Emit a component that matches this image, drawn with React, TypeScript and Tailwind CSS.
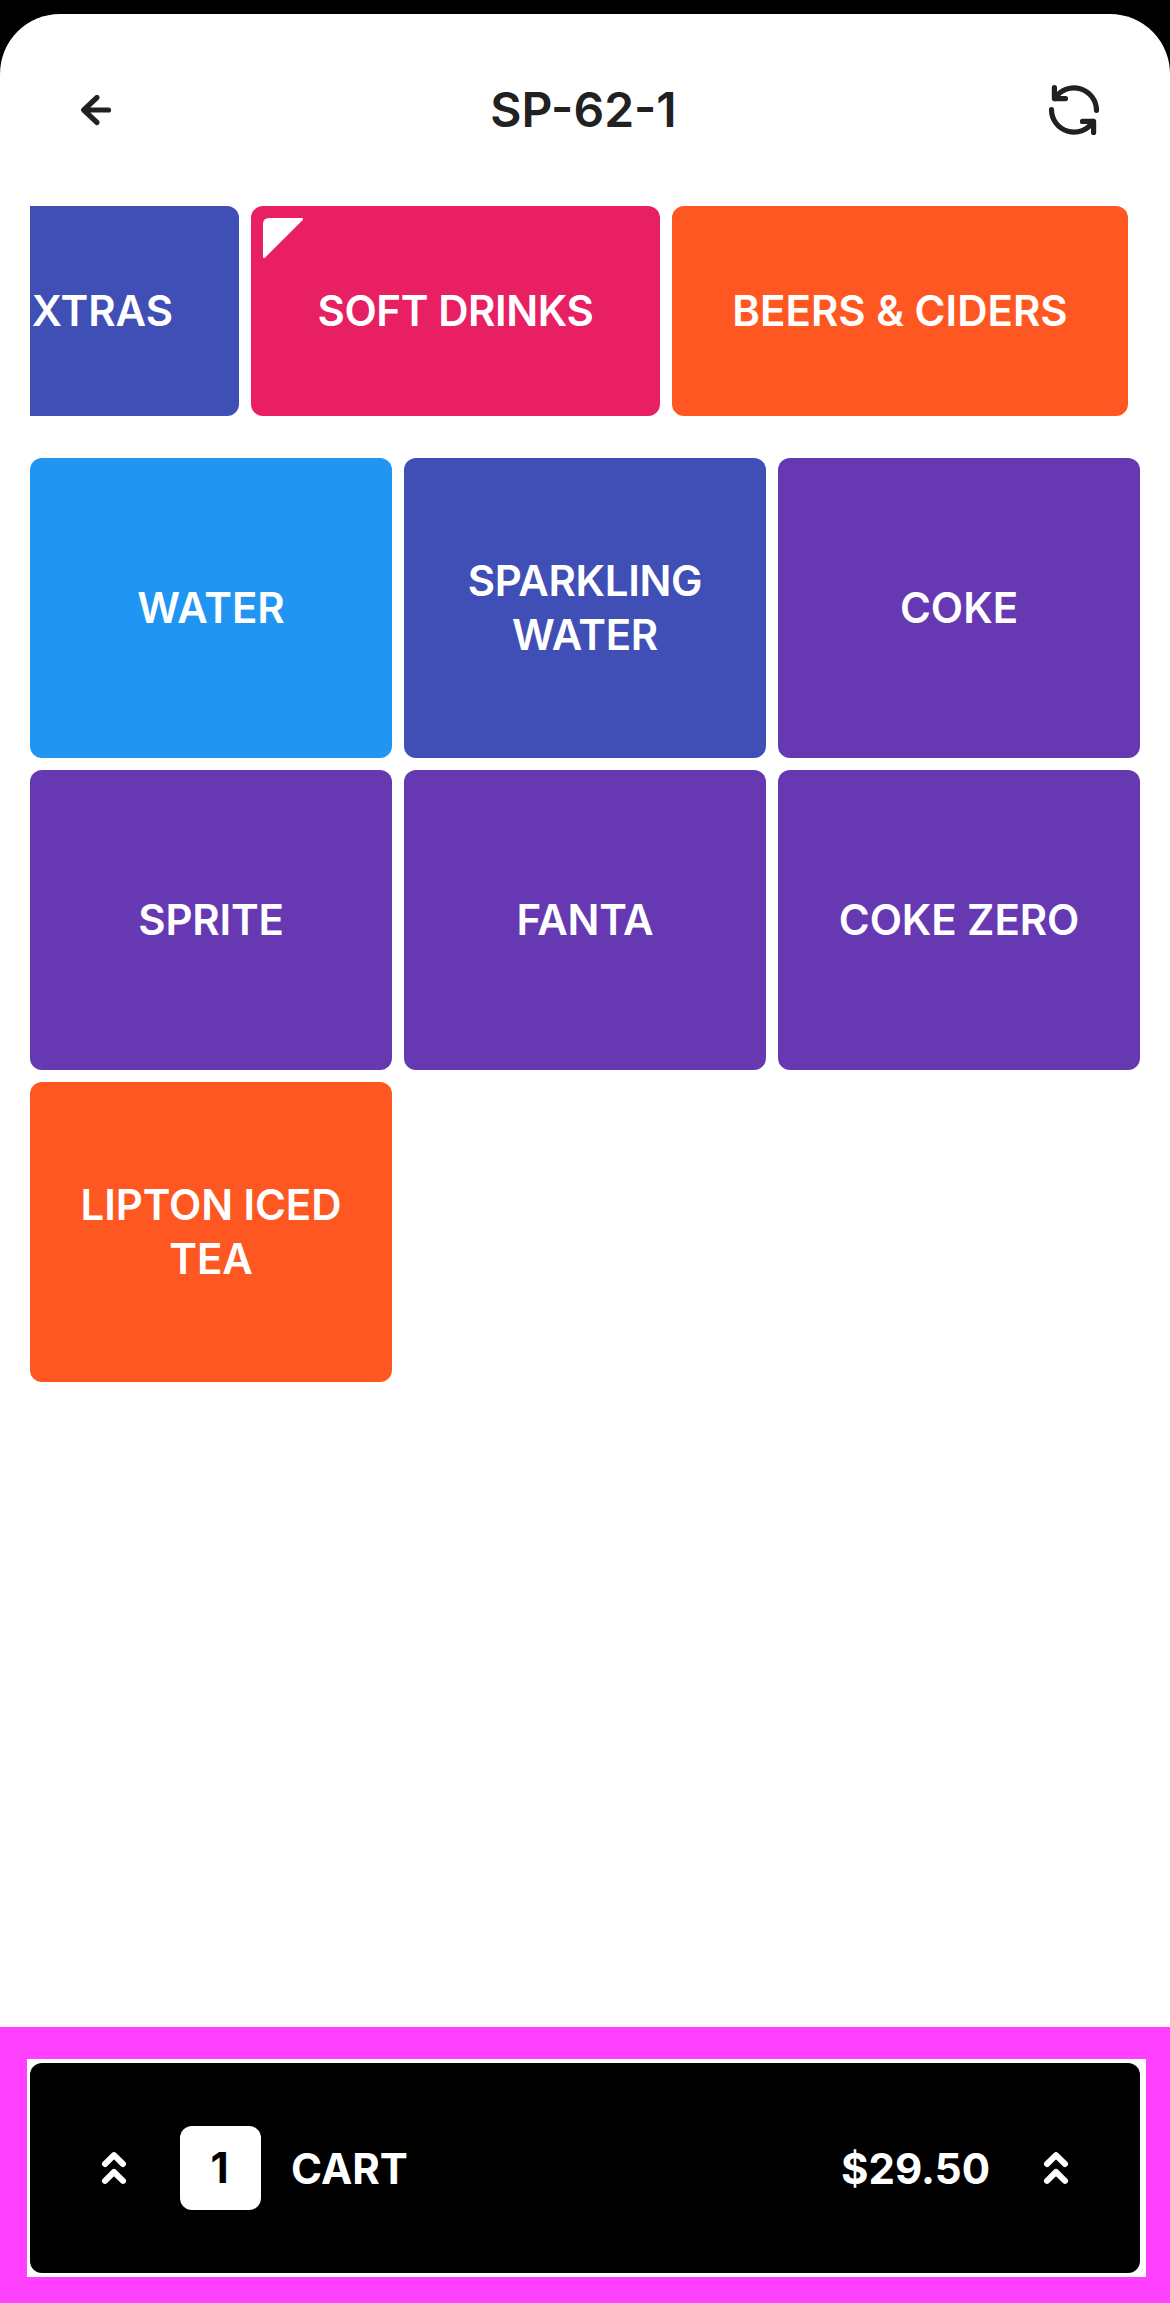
import clsx from "clsx"

type Category = {
  label: string
  className: string
  selected?: boolean
}

type Product = {
  label: string
  className: string
}

const categories: Category[] = [
  {
    label: "XTRAS",
    className: "w-[209px] justify-end rounded-r-xl bg-[#404fb5] pr-[66px]",
  },
  {
    label: "SOFT DRINKS",
    className:
      "w-[409px] justify-center rounded-xl bg-[#e81f62] tracking-[-0.4px]",
    selected: true,
  },
  {
    label: "BEERS & CIDERS",
    className: "w-[456px] justify-center rounded-xl bg-[#ff5722]",
  },
]

const products: Product[] = [
  { label: "WATER", className: "bg-[#2096f2]" },
  { label: "SPARKLING WATER", className: "bg-[#404fb5] tracking-[-0.3px]" },
  { label: "COKE", className: "bg-[#6639b3]" },
  { label: "SPRITE", className: "bg-[#6639b3] tracking-[-0.2px]" },
  { label: "FANTA", className: "bg-[#6639b3] tracking-[-0.2px]" },
  { label: "COKE ZERO", className: "bg-[#6639b3] tracking-[-0.1px]" },
  { label: "LIPTON ICED TEA", className: "bg-[#ff5722] tracking-[-0.1px]" },
]

const BackIcon = () => (
  <svg
    className="size-[60px]"
    viewBox="0 0 60 60"
    fill="none"
    stroke="currentColor"
    strokeWidth="5.2"
    strokeLinecap="round"
    strokeLinejoin="round"
  >
    <path d="M42.5 30H18M31 17.5L17.7 30L31 42.5" />
  </svg>
)

const RefreshIcon = () => (
  <svg
    className="size-[60px]"
    viewBox="0 0 60 60"
    fill="none"
    stroke="currentColor"
    strokeWidth="5.2"
    strokeLinecap="round"
    strokeLinejoin="round"
  >
    <path d="M52.5 30.3A22.5 22.5 0 0 0 10.8 18.6" />
    <path d="M10.4 7.5V18.6H21.5" />
    <path d="M7.5 29.7A22.5 22.5 0 0 0 49.2 41.4" />
    <path d="M49.6 52.5V41.4H38.5" />
  </svg>
)

const DoubleChevronUp = () => (
  <svg
    className="h-9 w-7"
    viewBox="0 0 28 36"
    fill="none"
    stroke="currentColor"
    strokeWidth="6"
    strokeLinecap="round"
    strokeLinejoin="round"
  >
    <path d="M5 14L14 5.2L23 14M5 30.8L14 22L23 30.8" />
  </svg>
)

const Header = () => (
  <header className="flex h-[192px] items-center justify-between px-[66px] text-[#212121]">
    <button>
      <BackIcon />
    </button>
    <h1 className="mr-[3px] text-[48px] leading-[60px] font-semibold">
      SP-62-1
    </h1>
    <button>
      <RefreshIcon />
    </button>
  </header>
)

const CategoryTile = ({ label, className, selected }: Category) => (
  <button
    className={clsx(
      "relative flex h-full shrink-0 items-center whitespace-nowrap",
      className
    )}
  >
    {selected ? (
      <svg
        className="absolute top-3 left-3 size-10"
        viewBox="0 0 40 40"
        fill="currentColor"
      >
        <path d="M6 0H39Q41 0.5 39.5 2.2L2.2 39.5Q0.5 41 0 39V6Q0 0 6 0Z" />
      </svg>
    ) : null}
    {label}
  </button>
)

const ProductTile = ({ label, className }: Product) => (
  <button
    className={clsx(
      "flex items-center justify-center rounded-xl px-9 text-center",
      className
    )}
  >
    {label}
  </button>
)

const CartBar = () => (
  <footer className="h-[276px] bg-[#ff40ff] pt-[32px] pr-6 pl-[27px]">
    <div className="h-[218px] bg-white pt-1 pr-[6px] pl-[3px]">
      <button className="flex h-[210px] w-full items-center rounded-xl bg-black px-[70px] text-[42px] leading-[54px] font-bold text-white">
        <DoubleChevronUp />
        <span className="ml-[52px] flex h-[84px] w-[81px] items-center justify-center rounded-xl bg-white pr-[2px] text-black">
          1
        </span>
        <span className="ml-[30px] pt-[2px]">CART</span>
        <span className="ml-auto pt-[2px]">$29.50</span>
        <span className="ml-[52px]">
          <DoubleChevronUp />
        </span>
      </button>
    </div>
  </footer>
)

export default function App() {
  return (
    <div className="h-[2303px] w-[1170px] overflow-hidden bg-black pt-[14px] font-['Inter',sans-serif]">
      <div className="flex h-full flex-col rounded-t-[60px] bg-white">
        <Header />
        <main className="flex-1 px-[30px] text-[42px] leading-[54px] font-semibold text-white">
          <nav className="flex h-[210px] gap-3">
            {categories.map((category) => (
              <CategoryTile key={category.label} {...category} />
            ))}
          </nav>
          <div className="mt-[42px] grid auto-rows-[300px] grid-cols-3 gap-3">
            {products.map((product) => (
              <ProductTile key={product.label} {...product} />
            ))}
          </div>
        </main>
        <CartBar />
      </div>
    </div>
  )
}
